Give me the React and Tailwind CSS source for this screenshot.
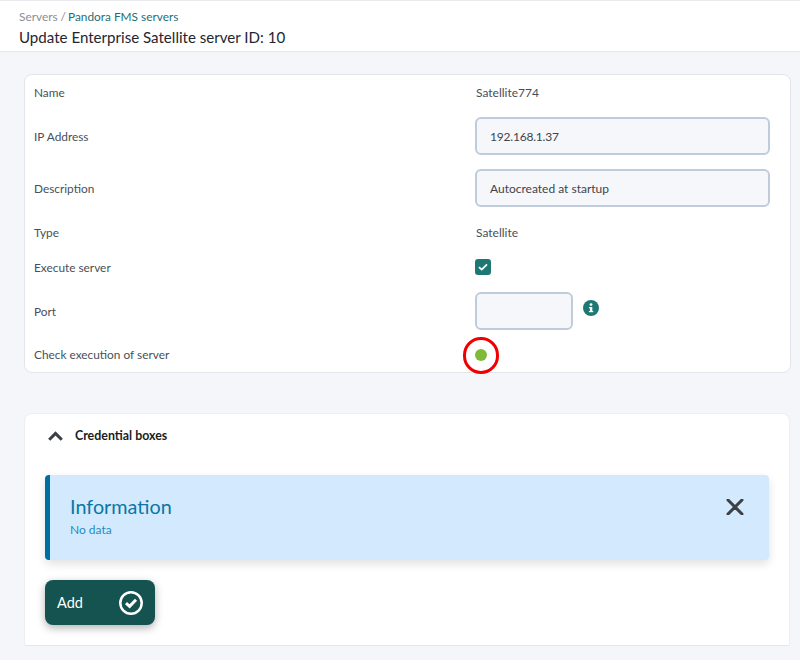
import React from "react";

function Row({ label, h, nudge, children }) {
  return (
    <div className={`flex items-center ${h}`}>
      <div className={`w-[441px] shrink-0 text-[11.85px] text-[#4a4f57] ${nudge ? "pt-[2px]" : ""}`}>{label}</div>
      <div className={`flex items-center text-[12px] text-[#4a4f57] ${nudge === "value" ? "pt-[2px] pl-[1px]" : ""}`}>{children}</div>
    </div>
  );
}

function Field({ value, w, tight }) {
  return (
    <div className={`${w} h-[38px] rounded-[6px] border-2 border-[#c0ccdc] bg-[#f6f7fb] pl-[13px] pt-[2px] flex items-center text-[12px] text-[#3f444b] ${tight ? "tracking-[-0.2px]" : ""}`}>
      {value}
    </div>
  );
}

export default function App() {
  return (
    <div className="w-[800px] h-[660px] overflow-hidden bg-[#f4f6fa] font-['Lato',sans-serif]">
      <header className="h-[52px] bg-white border-t border-t-[#e9eaee] border-b border-b-[#e6e8ee] pl-[19px] pt-[8px]">
        <div className="text-[11.85px] leading-[15px] text-[#8a8f96]">
          Servers / <span className="-ml-[1px] text-[#1d6f78]">Pandora FMS servers</span>
        </div>
        <h1 className="text-[15.1px] leading-[20px] mt-[3px] font-normal text-[#1f2630]">
          Update Enterprise Satellite server ID: 10
        </h1>
      </header>

      <main className="pl-[24px] pt-[22px]">
        <section className="w-[767px] bg-white border border-[#e3e5ea] rounded-[8px] pl-[9px] h-[299px]">
          <Row label="Name" h="h-[35px]"><span className="pl-[1px]">Satellite774</span></Row>
          <Row label="IP Address" h="h-[52px]" nudge="label"><Field value="192.168.1.37" w="w-[295px]" tight /></Row>
          <Row label="Description" h="h-[52px]" nudge="label"><Field value="Autocreated at startup" w="w-[295px]" /></Row>
          <Row label="Type" h="h-[36px]" nudge="value">Satellite</Row>
          <Row label="Execute server" h="h-[35px]">
            <div className="w-[16px] h-[16px] rounded-[3px] bg-[#1d7873] flex items-center justify-center -mt-[1px]">
              <svg width="10" height="8" viewBox="0 0 10 8" fill="none">
                <path d="M1 4.2 L3.7 6.6 L9 1.4" stroke="white" strokeWidth="1.8" />
              </svg>
            </div>
          </Row>
          <Row label="Port" h="h-[52px]" nudge="label">
            <Field value="" w="w-[98px]" />
            <svg className="ml-[10px] -mt-[7px]" width="16" height="16" viewBox="0 0 16 16">
              <circle cx="8" cy="8" r="8" fill="#1d7873" />
              <rect x="6.9" y="7" width="2.4" height="5" fill="white" />
              <rect x="5.9" y="7" width="2" height="1.2" fill="white" />
              <rect x="5.9" y="11" width="4.4" height="1.2" fill="white" />
              <circle cx="8" cy="4.6" r="1.4" fill="white" />
            </svg>
          </Row>
          <Row label="Check execution of server" h="h-[35px]">
            <div className="relative w-[12px] h-[12px] rounded-full bg-[#80ba3b] mt-[1px]">
              <div className="absolute -left-[12px] -top-[12px] w-[36px] h-[37px] rounded-full border-[3px] border-[#f00000]" />
            </div>
          </Row>
        </section>

        <section className="w-[766px] mt-[40px] bg-white border border-[#eceef2] border-b-[#e4e6eb] rounded-t-[8px] rounded-b-[2px] h-[233px] pl-[20px] pr-[20px]">
          <div className="h-[61px] pb-[18px] flex items-center">
            <svg className="ml-[3px]" width="15" height="10" viewBox="0 0 15 10" fill="none">
              <path d="M1.2 8.8 L7.5 2.4 L13.8 8.8" stroke="#3c3f43" strokeWidth="3" />
            </svg>
            <span className="ml-[12px] pt-[2px] text-[12.4px] font-bold text-[#1a1d21]">Credential boxes</span>
          </div>
          <div className="h-[85px] rounded-[4px] bg-[#d3eafe] border-l-[5px] border-l-[#006f9f] shadow-[0_4px_10px_rgba(0,0,0,0.12)] flex items-start justify-between pl-[20px] pr-[25px]">
            <div>
              <div className="text-[19.8px] leading-[24px] mt-[19px] text-[#0a76a8]">Information</div>
              <div className="text-[12px] leading-[15px] mt-[4px] text-[#1f8cc0]">No data</div>
            </div>
            <svg className="mt-[24px]" width="18" height="16" viewBox="0 0 18 16" fill="none">
              <path d="M2 1 L16 15 M16 1 L2 15" stroke="#3c3f43" strokeWidth="3" strokeLinecap="round" />
            </svg>
          </div>
          <button className="mt-[20px] w-[110px] h-[45px] rounded-[8px] bg-[#14534f] shadow-[0_3px_8px_rgba(0,0,0,0.3)] flex items-center justify-between pl-[12px] pr-[12px] text-[14.5px] text-white">
            <span>Add</span>
            <svg width="24" height="24" viewBox="0 0 24 24" fill="none">
              <circle cx="12" cy="12" r="10.7" stroke="white" strokeWidth="2.5" />
              <path d="M7 12.2 L10.6 15.4 L17 8.8" stroke="white" strokeWidth="3" />
            </svg>
          </button>
        </section>
      </main>
    </div>
  );
}
